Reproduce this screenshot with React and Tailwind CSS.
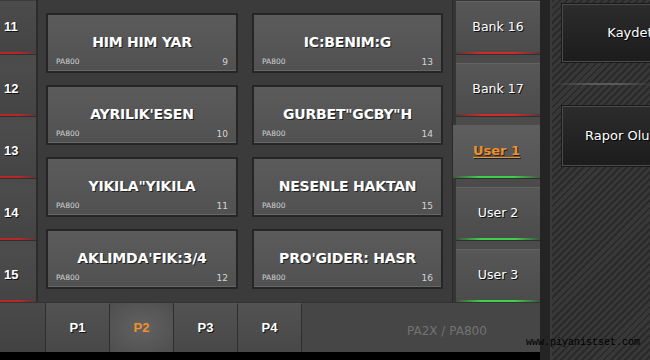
const songs = [
      { title: "HIM HIM YAR", n: 9 },
      { title: "AYRILIK'ESEN", n: 10 },
      { title: 'YIKILA"YIKILA', n: 11 },
      { title: "AKLIMDA'FIK:3/4", n: 12 },
      { title: "IC:BENIM:G", n: 13 },
      { title: 'GURBET"GCBY"H', n: 14 },
      { title: "NESENLE HAKTAN", n: 15 },
      { title: "PRO'GIDER: HASR", n: 16 },
];

const banks = [
      { label: "Bank 16", color: "red" },
      { label: "Bank 17", color: "red" },
      { label: "User 1", color: "green", active: true },
      { label: "User 2", color: "green" },
      { label: "User 3", color: "green" },
];

function Line({ color, left }) {
      if (left) {
            return <div className="h-[2px] bg-[linear-gradient(90deg,#b82626_0%,#b82626_55%,rgba(120,30,30,0.2)_100%)]" />;
      }
      return color === "red" ? (
            <div className="h-[2px] bg-[linear-gradient(90deg,rgba(90,30,30,0.4),#d02a2a_30%,#d02a2a_70%,rgba(90,30,30,0.4))]" />
      ) : (
            <div className="h-[2px] bg-[linear-gradient(90deg,rgba(40,90,40,0.4),#3fd04a_30%,#3fd04a_70%,rgba(40,90,40,0.4))]" />
      );
}

function Band() {
      return <div className="h-[9px] bg-[#4b4b4b] border-t border-[#303030]" />;
}

function SongCard({ title, n }) {
      return (
            <div className="h-[60px] border-2 border-[#262626] bg-[linear-gradient(180deg,#5b5b5b,#515151)] flex flex-col shadow-[inset_0_-1px_0_#666]">
                  <div className="mt-[18px] h-[18px] leading-[18px] text-center text-white font-bold text-[14px] tracking-[-0.2px] [text-shadow:1px_1px_0_#222]">
                        {title}
                  </div>
                  <div className="mt-auto mb-[3px] h-[12px] leading-[12px] flex justify-between px-[8px] text-[7.5px] text-[#d4d4d4]">
                        <span>PA800</span>
                        <span className="text-[9px]">{n}</span>
                  </div>
            </div>
      );
}

export default function App() {
      return (
            <div className="w-[650px] h-[360px] overflow-hidden bg-black flex relative font-['DejaVu_Sans',sans-serif]">
                  <div className="w-[540px] shrink-0 h-full flex flex-col">
                        <div className="h-[352px] flex flex-col bg-[#3b3b3b]">
                              <div className="h-[302px] flex">
                                    {/* left number column */}
                                    <div className="w-[36px] shrink-0 pt-[1px] flex flex-col">
                                          {[11, 12, 13, 14, 15].map((n, i) => (
                                                <div key={n}>
                                                      <div className="h-[53px] flex flex-col bg-[linear-gradient(180deg,#4c4c4c,#444)]">
                                                            <div className="flex-1 flex items-center pl-[4px] text-white text-[13px] font-bold font-['Liberation_Sans',sans-serif] [text-shadow:1px_1px_0_#111]">
                                                                  {n}
                                                            </div>
                                                            <Line left />
                                                      </div>
                                                      {i < 4 && <Band />}
                                                </div>
                                          ))}
                                    </div>
                                    <div className="w-[2px] shrink-0 bg-[#2c2c2c]" />

                                    {/* song grid */}
                                    <div className="w-[414px] shrink-0 pt-[13px] pl-[8px] pr-[9px] grid grid-rows-[60px_60px_60px_60px] grid-flow-col grid-cols-[192px_191px] gap-x-[14px] gap-y-[12px] content-start">
                                          {songs.map((s) => (
                                                <SongCard key={s.n} {...s} />
                                          ))}
                                    </div>

                                    {/* bank column */}
                                    <div className="w-[88px] shrink-0 pt-[1px] flex flex-col bg-[#353535] border-l border-[#2a2a2a]">
                                          {banks.map((b, i) => (
                                                <div key={b.label}>
                                                      <div
                                                            className={
                                                                  b.active
                                                                        ? "h-[53px] flex flex-col bg-[linear-gradient(180deg,#5e5e5e,#545454)]"
                                                                        : "h-[53px] ml-[3px] flex flex-col bg-[linear-gradient(180deg,#575757,#4b4b4b)] border-t border-[#636363]"
                                                            }
                                                      >
                                                            <div className="flex-1 flex items-center justify-center">
                                                                  {b.active ? (
                                                                        <span className="text-[#f0902a] font-bold text-[13px] underline underline-offset-2 [text-shadow:1px_1px_0_#222]">
                                                                              {b.label}
                                                                        </span>
                                                                  ) : (
                                                                        <span className="text-white text-[12.5px] [text-shadow:1px_1px_0_#111]">{b.label}</span>
                                                                  )}
                                                            </div>
                                                            <Line color={b.color} />
                                                      </div>
                                                      {i < 4 && <div className="ml-[3px]"><Band /></div>}
                                                </div>
                                          ))}
                                    </div>
                              </div>

                              {/* bottom tabs */}
                              <div className="h-[50px] flex bg-[#464646] border-t border-[#333]">
                                    <div className="w-[46px] bg-[linear-gradient(180deg,#4a4a4a,#424242)] border-r border-[#2e2e2e]" />
                                    {["P1", "P2", "P3", "P4"].map((p) => (
                                          <div
                                                key={p}
                                                className={
                                                      p === "P2"
                                                            ? "w-[64px] flex items-center justify-center border-r border-[#2e2e2e] bg-[radial-gradient(ellipse_at_center,#626262,#4e4e4e)] text-[#f0902a] font-bold text-[13px] font-['Liberation_Sans',sans-serif]"
                                                            : "w-[64px] flex items-center justify-center border-r border-[#2e2e2e] border-t border-t-[#555] bg-[linear-gradient(180deg,#525252,#484848)] text-white font-bold text-[13px] font-['Liberation_Sans',sans-serif] [text-shadow:1px_1px_0_#111]"
                                                }
                                          >
                                                {p}
                                          </div>
                                    ))}
                                    <div className="flex-1 flex items-center pl-[105px] pt-[7px] text-[12px] text-[#727272]">
                                          PA2X / PA800
                                    </div>
                              </div>
                        </div>
                  </div>

                  {/* divider */}
                  <div className="w-[12px] shrink-0 h-full bg-[#242424] border-r-2 border-[#3a3a3a]" />

                  {/* carbon panel */}
                  <div className="flex-1 min-w-0 overflow-hidden h-full pl-[9px] pt-[3px] flex flex-col bg-[repeating-linear-gradient(135deg,#2a2a2a_0px,#2a2a2a_2px,#383838_2px,#383838_5px)]">
                        <div className="w-[138px] h-[60px] shrink-0 border border-[#1a1a1a] shadow-[inset_0_0_0_1px_#4a4a4a] bg-[linear-gradient(180deg,#2c2c2c,#1c1c1c)] flex items-center justify-center text-white text-[13px] whitespace-nowrap [text-shadow:1px_1px_0_#000]">
                              Kaydet
                        </div>
                        <div className="h-[2px] mt-[20px] -ml-[9px] bg-[linear-gradient(90deg,transparent,#5a5a5a_40%,#5a5a5a_70%,transparent)]" />
                        <div className="w-[138px] h-[62px] mt-[20px] shrink-0 border border-[#1a1a1a] shadow-[inset_0_0_0_1px_#4a4a4a] bg-[linear-gradient(180deg,#2c2c2c,#1c1c1c)] flex items-center justify-center text-white text-[13px] whitespace-nowrap [text-shadow:1px_1px_0_#000]">
                              Rapor Oluştur
                        </div>
                  </div>

                  <div className="absolute left-[526px] top-[337px] text-[10px] leading-[12px] text-black font-['Liberation_Mono',monospace]">
                        www.piyanistset.com
                  </div>
            </div>
      );
}
